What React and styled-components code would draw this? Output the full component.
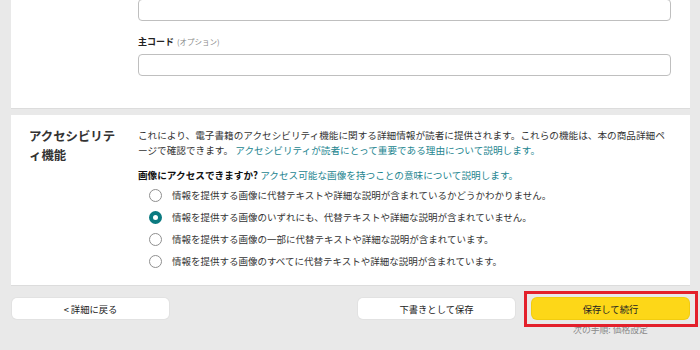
import React from "react";
import styled, { createGlobalStyle } from "styled-components";

const Global = createGlobalStyle`
  html, body { margin: 0; padding: 0; background: #e9e9e9; }
  body {
    font-family: "Noto Sans CJK JP", "Noto Sans", "Liberation Sans", sans-serif;
    color: #333;
    overflow: hidden;
  }
`;

const Page = styled.div`
  width: 700px;
  height: 350px;
  padding: 0 10px 0 11px;
  box-sizing: border-box;
  margin-top: -1px;
  display: flex;
  flex-direction: column;
`;

const Panel = styled.section`
  background: #fff;
  box-shadow: 0 1px 0 #dcdcdc;
  display: ${(p) => (p.$row ? "flex" : "block")};
  align-items: flex-start;
  padding: ${(p) => p.$pad};
  margin-bottom: ${(p) => p.$mb || "0"};
`;

const FieldStack = styled.div`
  margin-left: 127px;
  width: 533px;
  display: flex;
  flex-direction: column;
`;

const Input = styled.div`
  height: 20px;
  border: 1px solid #bfbfbf;
  border-radius: 4px;
  background: #fff;
`;

const Label = styled.div`
  margin: 14px 0 5px;
  font-size: 9px;
  font-weight: 700;
  line-height: 14px;
  color: #222;
`;

const Optional = styled.span`
  font-size: 7.5px;
  font-weight: 400;
  color: #888;
  margin-left: 3px;
`;

const Heading = styled.h2`
  margin: -1.5px 0 0 18px;
  width: 92px;
  flex: none;
  font-size: 12.4px;
  font-weight: 700;
  line-height: 19.5px;
  color: #333;
  word-break: break-all;
`;

const Body = styled.div`
  margin-left: 17px;
  width: 534px;
  font-size: 9.65px;
  line-height: 15px;
  color: #333;
`;

const Para = styled.p`
  margin: 0;
`;

const Link = styled.a`
  color: #23858f;
  text-decoration: none;
`;

const Question = styled.p`
  margin: 10px 0 5px;
  span.q {
    font-weight: 700;
    color: #111;
  }
`;

const Options = styled.div`
  display: flex;
  flex-direction: column;
  gap: 7px;
  margin-left: 11px;
`;

const Option = styled.label`
  display: flex;
  align-items: center;
  gap: 10px;
  height: 15px;
  font-size: 9.5px;
  color: #333;
`;

const Radio = styled.span`
  width: 13px;
  height: 13px;
  box-sizing: border-box;
  border-radius: 50%;
  flex: none;
  border: ${(p) => (p.$on ? "4px solid #0b7a80" : "1px solid #8f8f8f")};
  background: #fff;
`;

const Footer = styled.div`
  display: flex;
  align-items: flex-start;
  margin-top: 13px;
  padding: 0 1px;
`;

const Button = styled.button`
  width: 157px;
  height: 21px;
  border: none;
  border-radius: 5px;
  background: ${(p) => (p.$primary ? "#fdd718" : "#fff")};
  box-shadow: 0 0 0 1px ${(p) => (p.$primary ? "#f2cc0f" : "#e2e2e2")};
  font-family: inherit;
  font-size: 9.3px;
  color: #222;
  padding: 0;
  cursor: pointer;
`;

const Spacer = styled.div`
  flex: 1;
`;

const PrimaryWrap = styled.div`
  position: relative;
  margin-left: 17px;
  display: flex;
  flex-direction: column;
  align-items: center;
  &::after {
    content: "";
    position: absolute;
    left: -8px;
    right: -9px;
    top: -7px;
    height: 36px;
    box-sizing: border-box;
    border: 3px solid #e3202b;
    pointer-events: none;
  }
`;

const NextStep = styled.div`
  margin-top: 4px;
  font-size: 8.8px;
  color: #8a8a8a;
  line-height: 14px;
`;

const options = [
  "情報を提供する画像に代替テキストや詳細な説明が含まれているかどうかわかりません。",
  "情報を提供する画像のいずれにも、代替テキストや詳細な説明が含まれていません。",
  "情報を提供する画像の一部に代替テキストや詳細な説明が含まれています。",
  "情報を提供する画像のすべてに代替テキストや詳細な説明が含まれています。",
];

export default function App() {
  return (
    <>
      <Global />
      <Page>
        <Panel $pad="0 0 32px" $mb="7px">
          <FieldStack>
            <Input />
            <Label>
              主コード<Optional>(オプション)</Optional>
            </Label>
            <Input />
          </FieldStack>
        </Panel>
        <Panel $row $pad="13px 0 16px">
          <Heading>アクセシビリティ機能</Heading>
          <Body>
            <Para>
              これにより、電子書籍のアクセシビリティ機能に関する詳細情報が読者に提供されます。これらの機能は、本の商品詳細ページで確認できます。{" "}
              <Link href="#">アクセシビリティが読者にとって重要である理由について説明します。</Link>
            </Para>
            <Question>
              <span className="q">画像にアクセスできますか?</span>{" "}
              <Link href="#">アクセス可能な画像を持つことの意味について説明します。</Link>
            </Question>
            <Options>
              {options.map((t, i) => (
                <Option key={i}>
                  <Radio $on={i === 1} />
                  {t}
                </Option>
              ))}
            </Options>
          </Body>
        </Panel>
        <Footer>
          <Button>&lt; 詳細に戻る</Button>
          <Spacer />
          <Button>下書きとして保存</Button>
          <PrimaryWrap>
            <Button $primary>保存して続行</Button>
            <NextStep>次の手順: 価格設定</NextStep>
          </PrimaryWrap>
        </Footer>
      </Page>
    </>
  );
}
